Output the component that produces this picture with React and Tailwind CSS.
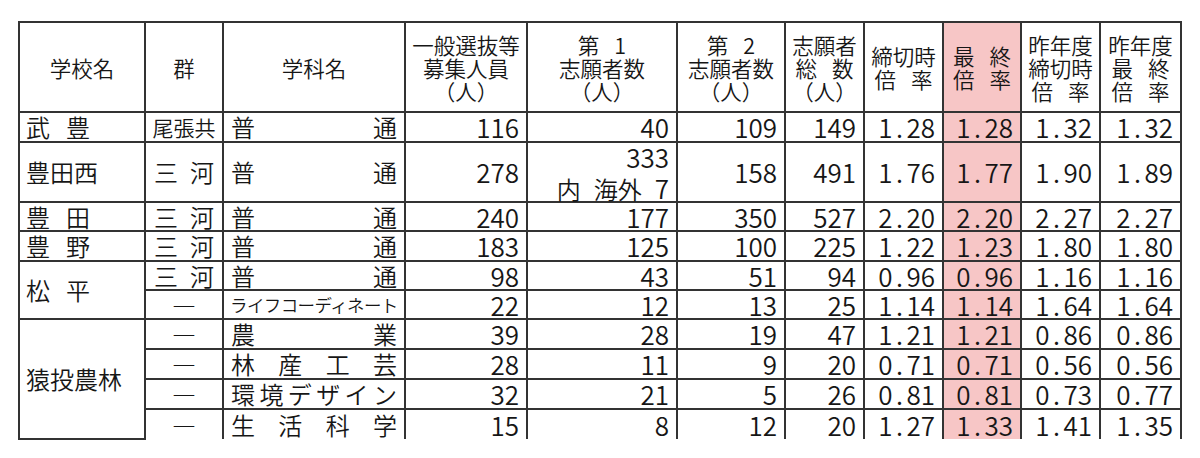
import React from 'react';

const line = 'border-2 border-[#333]';

const rows = [
  { school: ['武', '豊'], group: '尾張共', subject: ['普', '通'], nums: ['116', '40', '109', '149', '1.28', '1.28', '1.32', '1.32'], h: 'h-[30px]' },
  { school: ['豊田西'], group: '三河', subject: ['普', '通'], nums: ['278', 'split', '158', '491', '1.76', '1.77', '1.90', '1.89'], h: 'h-[60px]' },
  { school: ['豊', '田'], group: '三河', subject: ['普', '通'], nums: ['240', '177', '350', '527', '2.20', '2.20', '2.27', '2.27'], h: 'h-[29px]' },
  { school: ['豊', '野'], group: '三河', subject: ['普', '通'], nums: ['183', '125', '100', '225', '1.22', '1.23', '1.80', '1.80'], h: 'h-[30px]' },
  { school: ['松', '平'], span: 2, group: '三河', subject: ['普', '通'], nums: ['98', '43', '51', '94', '0.96', '0.96', '1.16', '1.16'], h: 'h-[29px]' },
  { group: '—', subject: 'ライフコーディネート', nums: ['22', '12', '13', '25', '1.14', '1.14', '1.64', '1.64'], h: 'h-[29px]' },
  { school: ['猿投農林'], span: 4, group: '—', subject: ['農', '業'], nums: ['39', '28', '19', '47', '1.21', '1.21', '0.86', '0.86'], h: 'h-[30px]' },
  { group: '—', subject: ['林', '産', '工', '芸'], nums: ['28', '11', '9', '20', '0.71', '0.71', '0.56', '0.56'], h: 'h-[30px]' },
  { group: '—', subject: ['環', '境', 'デ', 'ザ', 'イ', 'ン'], nums: ['32', '21', '5', '26', '0.81', '0.81', '0.73', '0.77'], h: 'h-[30px]' },
  { group: '—', subject: ['生', '活', '科', '学'], nums: ['15', '8', '12', '20', '1.27', '1.33', '1.41', '1.35'], h: 'h-[30px]', last: true },
];

// 文字を均等割り付けする
const Spread = ({ chars, className = '' }) => (
  <div className={`flex justify-between ${className}`}>
    {chars.map((c, i) => (
      <span key={i}>{c}</span>
    ))}
  </div>
);

// 小数点は元の表のように少し広めにとる
const Num = ({ value }) => {
  if (!value.includes('.')) return value;
  const [a, b] = value.split('.');
  return (
    <>
      {a}
      <span className="mx-[3.5px]">.</span>
      {b}
    </>
  );
};

// 見出しの1行。配列なら2文字を離して置く
const HeadLine = ({ l }) => {
  if (Array.isArray(l)) {
    return (
      <div className="flex justify-center gap-[15px]">
        <span>{l[0]}</span>
        <span>{l[1]}</span>
      </div>
    );
  }
  return <div className="whitespace-nowrap">{l}</div>;
};

const Head = ({ lines, pink }) => (
  <th className={`${line} font-[350] align-middle text-center text-[21.5px] leading-[23px] ${pink ? 'bg-[#f7c6c6]' : ''}`}>
    {lines.map((l, i) => (
      <HeadLine key={i} l={l} />
    ))}
  </th>
);

const GroupCell = ({ group, bottom }) => {
  if (group === '三河') {
    return (
      <td className={`${line} ${bottom} px-[8px] text-[24px] leading-none`}>
        <Spread chars={['三', '河']} />
      </td>
    );
  }
  if (group === '尾張共') {
    return <td className={`${line} ${bottom} px-[4px] text-[21px] leading-none text-center whitespace-nowrap`}>尾張共</td>;
  }
  return <td className={`${line} ${bottom} text-center text-[24px] leading-none`}>―</td>;
};

const SubjectCell = ({ subject, bottom }) => {
  if (typeof subject === 'string') {
    return (
      <td className={`${line} ${bottom} pl-[6px] text-[17.5px] leading-none whitespace-nowrap tracking-[-0.6px]`}>
        {subject}
      </td>
    );
  }
  return (
    <td className={`${line} ${bottom} px-[7px] text-[24px] leading-none`}>
      <Spread chars={subject} />
    </td>
  );
};

export default function App() {
  return (
    <div className="bg-white w-[1200px] h-[458px] overflow-hidden pt-[21px] pl-[18px] font-[350] text-[#161616] font-['Noto_Sans_CJK_JP','Noto_Sans',sans-serif]">
      <table className="table-fixed border-collapse">
        <colgroup>
          <col className="w-[126px]" />
          <col className="w-[78px]" />
          <col className="w-[182px]" />
          <col className="w-[122px]" />
          <col className="w-[150px]" />
          <col className="w-[108px]" />
          <col className="w-[79px]" />
          <col className="w-[79px]" />
          <col className="w-[78px]" />
          <col className="w-[79px]" />
          <col className="w-[81px]" />
        </colgroup>
        <thead>
          <tr className="h-[90px]">
            <Head lines={['学校名']} />
            <Head lines={['群']} />
            <Head lines={['学科名']} />
            <Head lines={['一般選抜等', '募集人員', '（人）']} />
            <Head lines={[['第', '1'], '志願者数', '（人）']} />
            <Head lines={[['第', '2'], '志願者数', '（人）']} />
            <Head lines={['志願者', ['総', '数'], '（人）']} />
            <Head lines={['締切時', ['倍', '率']]} />
            <Head lines={[['最', '終'], ['倍', '率']]} pink />
            <Head lines={['昨年度', '締切時', ['倍', '率']]} />
            <Head lines={['昨年度', ['最', '終'], ['倍', '率']]} />
          </tr>
        </thead>
        <tbody>
          {rows.map((r, ri) => {
            const bottom = r.last ? 'border-b-0' : '';
            return (
              <tr key={ri} className={r.h}>
                {r.school && (
                  <td rowSpan={r.span || 1} className={`${line} ${bottom} pl-[6px] text-[24px] leading-none align-middle`}>
                    {r.school.length === 1 ? (
                      <span>{r.school[0]}</span>
                    ) : (
                      <div className="flex gap-[16px]">
                        <span>{r.school[0]}</span>
                        <span>{r.school[1]}</span>
                      </div>
                    )}
                  </td>
                )}
                <GroupCell group={r.group} bottom={bottom} />
                <SubjectCell subject={r.subject} bottom={bottom} />
                {r.nums.map((n, ni) => (
                  <td
                    key={ni}
                    className={`${line} ${bottom} text-right pr-[7px] text-[26px] leading-none align-middle whitespace-nowrap ${ni === 5 ? 'bg-[#f7c6c6]' : ''}`}
                  >
                    {n === 'split' ? (
                      <div className="flex flex-col items-end gap-[5px]">
                        <span>333</span>
                        <div className="flex items-baseline gap-[13px] text-[24px]">
                          <span>内</span>
                          <span>海外</span>
                          <span className="text-[26px]">7</span>
                        </div>
                      </div>
                    ) : (
                      <Num value={n} />
                    )}
                  </td>
                ))}
              </tr>
            );
          })}
        </tbody>
      </table>
    </div>
  );
}
